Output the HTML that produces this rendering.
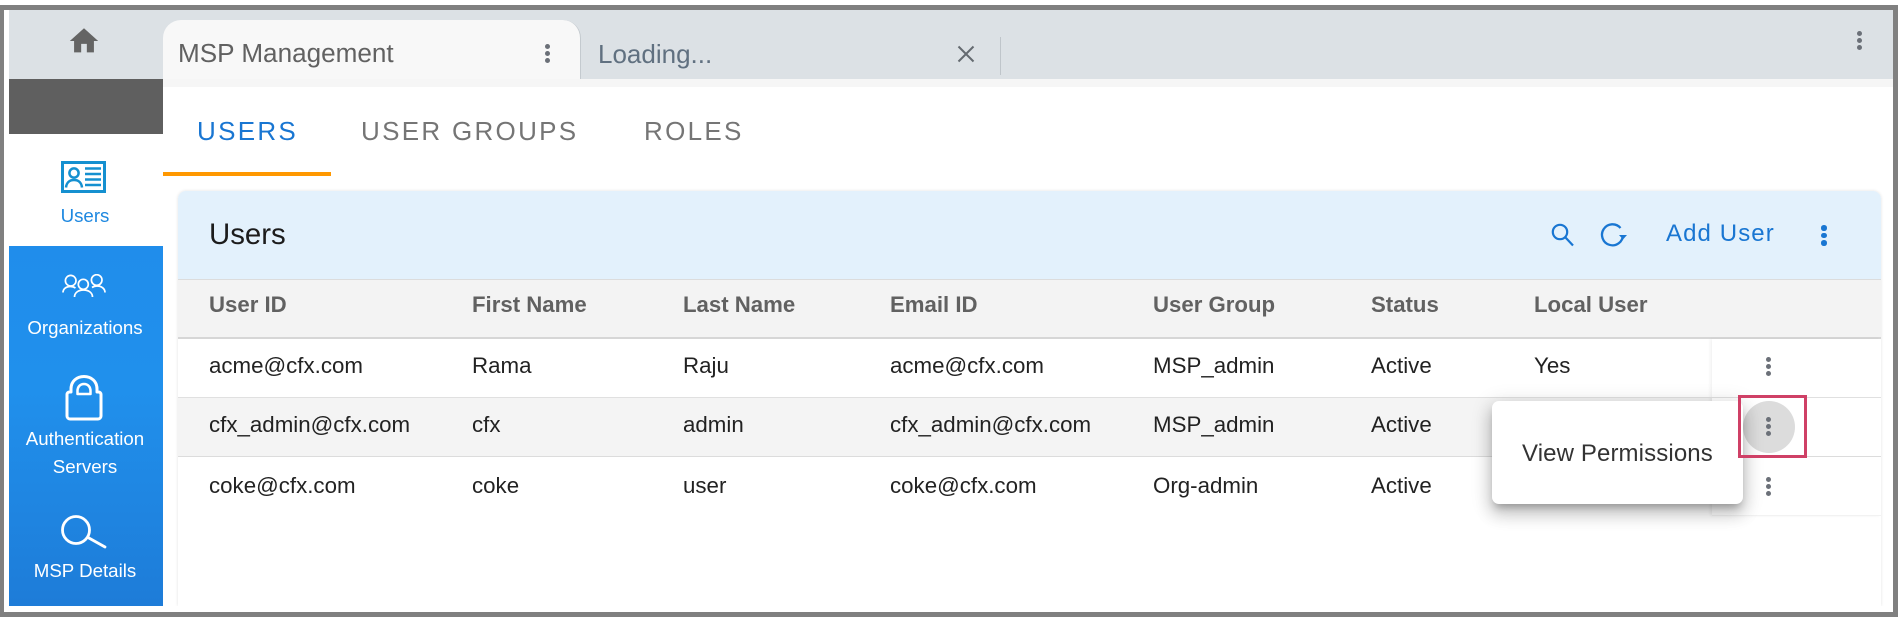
<!DOCTYPE html>
<html><head><meta charset="utf-8"><style>
html,body{margin:0;padding:0;background:#fff;width:1901px;height:628px;overflow:hidden}
body{position:relative;font-family:"Liberation Sans",sans-serif}
.a{position:absolute}
.t{position:absolute;white-space:nowrap}
.c{font-size:22.3px;line-height:30px;color:#222}
.h{font-size:22.2px;line-height:30px;font-weight:bold;color:#616161}
.n{font-size:26px;line-height:30px;letter-spacing:2.3px;color:#757575}
.s{font-size:18.7px;line-height:24px;left:8px;width:154px;text-align:center;color:#fff}
.d{position:absolute;width:6px}
.d i{display:block;width:5px;height:5px;border-radius:50%;background:#6b7078;margin:0 auto 2px}
</style></head><body>
<!-- frame -->
<div class="a" style="left:0;top:5px;width:1898px;height:5px;background:#808080"></div>
<div class="a" style="left:0;top:5px;width:4px;height:612px;background:#808080"></div>
<div class="a" style="left:1893px;top:5px;width:5px;height:612px;background:#808080"></div>
<div class="a" style="left:0;top:612px;width:1898px;height:5px;background:#808080"></div>
<!-- top bar -->
<div class="a" style="left:9px;top:10px;width:1884px;height:69px;background:#dce1e5"></div>
<div class="a" style="left:163px;top:79px;width:1730px;height:8px;background:#f6f6f6"></div>
<svg class="a" style="left:67px;top:24px" width="34" height="34" viewBox="0 0 24 24"><path fill="#646464" d="M10 20v-6h4v6h5v-8h3L12 3 2 12h3v8z"/></svg>
<!-- tab -->
<div class="a" style="left:163px;top:20px;width:417px;height:59px;background:#f8f8f8;border-radius:18px 18px 0 0;border-right:1.5px solid #c4cacf;box-sizing:content-box"></div>
<div class="t" style="left:178px;top:38px;font-size:26.1px;line-height:30px;color:#616161">MSP Management</div>
<div class="d" style="left:544px;top:44px"><i></i><i></i><i></i></div>
<div class="t" style="left:598px;top:39px;font-size:26px;line-height:30px;color:#607080">Loading...</div>
<svg class="a" style="left:957px;top:45px" width="18" height="18" viewBox="0 0 18 18"><path d="M1.500 1.500L16.500 16.500M16.500 1.500L1.500 16.500" stroke="#646a70" stroke-width="2" fill="none"/></svg>
<div class="a" style="left:1000px;top:37px;width:1px;height:38px;background:#bfc5ca"></div>
<div class="d" style="left:1856px;top:31px"><i></i><i></i><i></i></div>
<!-- sidebar -->
<div class="a" style="left:9px;top:79px;width:154px;height:55px;background:#5f5f5f"></div>
<div class="a" style="left:9px;top:246px;width:154px;height:360px;background:linear-gradient(#208deb,#2090ec 40%,#1e7cd8)"></div>
<svg class="a" style="left:61px;top:161px" width="46" height="32" viewBox="0 0 46 32" fill="none" stroke="#1590d0"><rect x="1.500" y="1.500" width="42" height="29" stroke-width="3"/><circle cx="13" cy="12" r="4.600" stroke-width="2.500"/><path d="M5 26.500c.5-5 3.500-7.500 8-7.500s7.500 2.500 8 7.500" stroke-width="2.500"/><path d="M24 7.500h16M24 13h16M24 18.500h16M24 24h16" stroke-width="2.600"/></svg>
<div class="t s" style="top:204px;color:#1e88e0">Users</div>
<svg class="a" style="left:62px;top:274px" width="44" height="24" viewBox="0 0 44 24" fill="none" stroke="#fff" stroke-width="1.700"><circle cx="8.700" cy="6.700" r="5.300"/><circle cx="34.700" cy="6" r="5.300"/><circle cx="21.300" cy="10.300" r="5"/><path d="M1 18.500c0-3.500 3-6 7.500-6 2 0 3.500.5 5 1.500M43 18.500c0-3.500-3-6.500-8-6.500-2 0-3.500.5-5 1.500M12.500 23c0-4 3.500-7 9-7s9 3 9 7"/></svg>
<div class="t s" style="top:316px">Organizations</div>
<svg class="a" style="left:65px;top:375px" width="38" height="46" viewBox="0 0 38 46" fill="none" stroke="#fff" stroke-width="3" stroke-linejoin="round"><path d="M6 17V14C6 6.500 11.500 1.500 19 1.500S32 6.500 32 14v3h1.500a2.500 2.500 0 0 1 2.500 2.500V41a3 3 0 0 1-3 3H5a3 3 0 0 1-3-3V19.500A2.500 2.500 0 0 1 4.500 17z"/><path d="M12.500 19v-3c0-4 2.500-7 6.500-7s6.500 3 6.500 7v3z" stroke-width="2.500"/></svg>
<div class="t s" style="top:427px">Authentication</div>
<div class="t s" style="top:455px">Servers</div>
<svg class="a" style="left:60px;top:514px" width="48" height="36" viewBox="0 0 48 36" fill="none" stroke="#fff" stroke-width="2.800"><circle cx="16" cy="16" r="13.500"/><path d="M28 23.500l17 9.500" stroke-linecap="round"/></svg>
<div class="t s" style="top:559px">MSP Details</div>
<!-- nav tabs -->
<div class="t n" style="left:197px;top:116px;color:#1976d2">USERS</div>
<div class="t n" style="left:361px;top:116px">USER GROUPS</div>
<div class="t n" style="left:644px;top:116px">ROLES</div>
<div class="a" style="left:163px;top:172px;width:168px;height:4px;background:#ff9800"></div>
<!-- card -->
<div class="a" style="left:178px;top:191px;width:1703px;height:415px;background:#fff;border-radius:8px 8px 0 0;box-shadow:0 0 3px rgba(0,0,0,.12);clip-path:inset(-4px -4px 0 -4px)"></div>
<div class="a" style="left:178px;top:191px;width:1703px;height:88px;background:#e3f1fc;border-radius:8px 8px 0 0"></div>
<div class="a" style="left:178px;top:279px;width:1703px;height:58px;background:#f3f3f3;border-top:1px solid #dcdcdc;box-sizing:border-box"></div>
<div class="a" style="left:178px;top:337px;width:1703px;height:2px;background:#d6d6d6"></div>
<div class="a" style="left:178px;top:397px;width:1703px;height:59px;background:#f4f4f4"></div>
<div class="a" style="left:1712px;top:339px;width:169px;height:177px;background:#fff;box-shadow:-2px 0 3px rgba(0,0,0,.05);border-bottom:1px solid #f2f2f2;box-sizing:border-box"></div>
<div class="a" style="left:178px;top:396.500px;width:1703px;height:1px;background:#e0e0e0"></div>
<div class="a" style="left:178px;top:455.500px;width:1703px;height:1px;background:#dcdcdc"></div>
<div class="t" style="left:209px;top:217px;font-size:29.400px;line-height:36px;color:#1c1c1c">Users</div>
<svg class="a" style="left:1549.500px;top:222px" width="26" height="25" viewBox="0 0 26 25" fill="none" stroke="#1976d2" stroke-width="2.200"><circle cx="10" cy="10" r="7.200"/><path d="M15.500 15.500l7.500 8"/></svg>
<svg class="a" style="left:1600px;top:222px" width="30" height="26" viewBox="0 0 30 26" fill="none"><path d="M20.500 6A10.500 10.500 0 1 0 23 13" stroke="#1976d2" stroke-width="2.300"/><path d="M19 13h8l-4 4.500z" fill="#1976d2"/></svg>
<div class="t" style="left:1666px;top:219px;font-size:24px;line-height:30px;letter-spacing:1.100px;color:#1976d2">Add User</div>
<div class="d" style="left:1821px;top:225px"><i style="background:#1976d2;margin-bottom:2px;width:5.500px;height:5.500px"></i><i style="background:#1976d2;margin-bottom:2px;width:5.500px;height:5.500px"></i><i style="background:#1976d2;width:5.500px;height:5.500px"></i></div>
<!-- table head -->
<div class="t h" style="left:209px;top:290px">User ID</div>
<div class="t h" style="left:472px;top:290px">First Name</div>
<div class="t h" style="left:683px;top:290px">Last Name</div>
<div class="t h" style="left:890px;top:290px">Email ID</div>
<div class="t h" style="left:1153px;top:290px">User Group</div>
<div class="t h" style="left:1371px;top:290px">Status</div>
<div class="t h" style="left:1534px;top:290px">Local User</div>
<!-- rows -->
<div class="t c" style="left:209px;top:351px">acme@cfx.com</div>
<div class="t c" style="left:472px;top:351px">Rama</div>
<div class="t c" style="left:683px;top:351px">Raju</div>
<div class="t c" style="left:890px;top:351px">acme@cfx.com</div>
<div class="t c" style="left:1153px;top:351px">MSP_admin</div>
<div class="t c" style="left:1371px;top:351px">Active</div>
<div class="t c" style="left:1534px;top:351px">Yes</div>
<div class="t c" style="left:209px;top:410px">cfx_admin@cfx.com</div>
<div class="t c" style="left:472px;top:410px">cfx</div>
<div class="t c" style="left:683px;top:410px">admin</div>
<div class="t c" style="left:890px;top:410px">cfx_admin@cfx.com</div>
<div class="t c" style="left:1153px;top:410px">MSP_admin</div>
<div class="t c" style="left:1371px;top:410px">Active</div>
<div class="t c" style="left:209px;top:471px">coke@cfx.com</div>
<div class="t c" style="left:472px;top:471px">coke</div>
<div class="t c" style="left:683px;top:471px">user</div>
<div class="t c" style="left:890px;top:471px">coke@cfx.com</div>
<div class="t c" style="left:1153px;top:471px">Org-admin</div>
<div class="t c" style="left:1371px;top:471px">Active</div>
<!-- row actions -->
<div class="d" style="left:1765px;top:357px"><i></i><i></i><i></i></div>
<div class="a" style="left:1743px;top:400.500px;width:52px;height:52px;border-radius:50%;background:#dcdcdc"></div>
<div class="d" style="left:1765px;top:417px"><i></i><i></i><i></i></div>
<div class="d" style="left:1765px;top:477px"><i></i><i></i><i></i></div>
<!-- menu -->
<div class="a" style="left:1492px;top:401px;width:251px;height:103px;background:#fff;border-radius:7px;box-shadow:0 6px 8px -3px rgba(0,0,0,.25),0 10px 16px 2px rgba(0,0,0,.14),0 4px 20px 3px rgba(0,0,0,.12)"></div>
<div class="t" style="left:1522px;top:439px;font-size:24px;line-height:30px;letter-spacing:.12px;color:#333">View Permissions</div>
<div class="a" style="left:1738px;top:395px;width:69px;height:63px;border:3.500px solid #cf4066;box-sizing:border-box"></div>
</body></html>
